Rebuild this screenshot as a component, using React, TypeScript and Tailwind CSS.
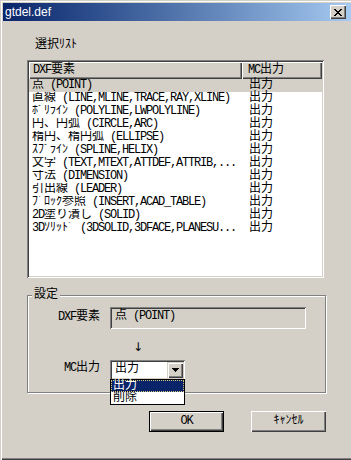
import React from "react";

function T({ s }: { s: string }) {
  const parts = s.split(/([\x20-\x7e]+)/);
  return (
    <>
      {parts.map((p, i) =>
        p === "" ? null : /^[\x20-\x7e]+$/.test(p) ? (
          <span key={i} className="tracking-[-1.2px]">
            {p}
          </span>
        ) : (
          <span key={i}>{p}</span>
        )
      )}
    </>
  );
}

const rows = [
  "点 (POINT)",
  "直線 (LINE,MLINE,TRACE,RAY,XLINE)",
  "ﾎﾟﾘﾗｲﾝ (POLYLINE,LWPOLYLINE)",
  "円、円弧 (CIRCLE,ARC)",
  "楕円、楕円弧 (ELLIPSE)",
  "ｽﾌﾟﾗｲﾝ (SPLINE,HELIX)",
  "文字 (TEXT,MTEXT,ATTDEF,ATTRIB,...",
  "寸法 (DIMENSION)",
  "引出線 (LEADER)",
  "ﾌﾞﾛｯｸ参照 (INSERT,ACAD_TABLE)",
  "2D塗り潰し (SOLID)",
  "3Dｿﾘｯﾄﾞ (3DSOLID,3DFACE,PLANESU...",
];

export default function App() {
  return (
    <div className="w-[351px] h-[460px] overflow-hidden bg-[#d4d0c8] text-[12px] leading-[13px] text-black font-['Liberation_Mono','Noto_Sans_CJK_JP',monospace]">
      <div className="w-[354px] h-[460px] p-[3px] bg-[#d4d0c8] flex flex-col shadow-[inset_1px_1px_0_#d4d0c8,inset_2px_2px_0_#ffffff,inset_-1px_-1px_0_#404040,inset_-2px_-2px_0_#808080]">
        {/* Title bar */}
        <div className="h-[18px] shrink-0 flex items-center justify-between bg-linear-to-r from-[#0a246a] to-[#a6caf0]">
          <span className="pl-[2px] text-white text-[12px] font-['Liberation_Sans',sans-serif]">gtdel.def</span>
          <div className="mr-[5px] w-[16px] h-[14px] bg-[#d4d0c8] flex items-center justify-center shadow-[inset_1px_1px_0_#ffffff,inset_-1px_-1px_0_#404040,inset_-2px_-2px_0_#808080]">
            <svg width="8" height="7" viewBox="0 0 8 7" shapeRendering="crispEdges">
              <path d="M0 0h2v1h-2zM6 0h2v1h-2zM1 1h2v1h-2zM5 1h2v1h-2zM2 2h4v1h-4zM3 3h2v1h-2zM2 4h4v1h-4zM1 5h2v1h-2zM5 5h2v1h-2zM0 6h2v1h-2zM6 6h2v1h-2z" fill="#000" />
            </svg>
          </div>
        </div>

        {/* Content */}
        <div className="pl-[24px] flex flex-col">
          <div className="mt-[18px] ml-[8px] h-[13px] whitespace-pre">
            <T s="選択ﾘｽﾄ" />
          </div>

          {/* List box */}
          <div className="mt-[8px] w-[297px] h-[218px] p-[2px] bg-white shadow-[inset_1px_1px_0_#808080,inset_-1px_-1px_0_#ffffff,inset_2px_2px_0_#404040,inset_-2px_-2px_0_#d4d0c8]">
            <div className="flex h-[17px]">
              <div className="w-[213px] h-[17px] pl-[4px] pt-[2px] bg-[#d4d0c8] whitespace-pre shadow-[inset_1px_1px_0_#ffffff,inset_-1px_-1px_0_#404040,inset_-2px_-2px_0_#808080]">
                <T s="DXF要素" />
              </div>
              <div className="w-[80px] h-[17px] pl-[6px] pt-[2px] bg-[#d4d0c8] whitespace-pre shadow-[inset_1px_1px_0_#ffffff,inset_-1px_-1px_0_#404040,inset_-2px_-2px_0_#808080]">
                <T s="MC出力" />
              </div>
            </div>
            {rows.map((r, i) => (
              <div key={i} className={i === 0 ? "flex h-[13px] bg-[#d4d0c8]" : "flex h-[13px]"}>
                <div className="w-[213px] pl-[3px] whitespace-pre overflow-hidden">
                  <T s={r} />
                </div>
                <div className="w-[80px] pl-[7px] whitespace-pre">
                  <T s="出力" />
                </div>
              </div>
            ))}
          </div>

          {/* Group box */}
          <div className="relative mt-[17px] w-[299px] h-[98px] border border-[#808080] shadow-[inset_1px_1px_0_#ffffff,1px_1px_0_#ffffff]">
            <div className="absolute left-[4px] top-[-7px] px-[2px] bg-[#d4d0c8] whitespace-pre">
              <T s="設定" />
            </div>
            <div className="flex pt-[11px]">
              <div className="w-[72px] pt-[4px] text-right whitespace-pre">
                <T s="DXF要素" />
              </div>
              <div className="ml-[10px] w-[196px] h-[22px] pl-[5px] pt-[3px] bg-[#d4d0c8] whitespace-pre shadow-[inset_1px_1px_0_#808080,inset_-1px_-1px_0_#ffffff,inset_2px_2px_0_#404040,inset_-2px_-2px_0_#d4d0c8]">
                <T s="点 (POINT)" />
              </div>
            </div>
            <div className="mt-[12px] h-[13px] pl-[105px] font-['DejaVu_Sans',sans-serif] text-[12px] leading-[13px]">↓</div>
            <div className="flex mt-[6px]">
              <div className="w-[72px] pt-[2px] text-right whitespace-pre">
                <T s="MC出力" />
              </div>
              <div className="relative ml-[10px] w-[75px] h-[20px] bg-white shadow-[inset_1px_1px_0_#808080,inset_-1px_-1px_0_#ffffff,inset_2px_2px_0_#404040,inset_-2px_-2px_0_#d4d0c8]">
                <div className="pl-[5px] pt-[3px] whitespace-pre">
                  <T s="出力" />
                </div>
                <div className="absolute right-[2px] top-[2px] w-[16px] h-[16px] bg-[#d4d0c8] flex items-center justify-center shadow-[inset_1px_1px_0_#d4d0c8,inset_2px_2px_0_#ffffff,inset_-1px_-1px_0_#404040,inset_-2px_-2px_0_#808080]">
                  <svg width="7" height="4" viewBox="0 0 7 4" shapeRendering="crispEdges">
                    <path d="M0 0h7v1h-7zM1 1h5v1h-5zM2 2h3v1h-3zM3 3h1v1h-1z" fill="#000" />
                  </svg>
                </div>
                <div className="absolute left-0 top-[19px] w-[75px] border border-black bg-white z-10">
                  <div className="h-[12px] leading-[12px] pl-[2px] bg-[#0a246a] text-white whitespace-pre outline-1 outline-dotted outline-[#d8c878] -outline-offset-1">
                    <T s="出力" />
                  </div>
                  <div className="h-[12px] leading-[12px] pl-[2px] whitespace-pre">
                    <T s="削除" />
                  </div>
                </div>
              </div>
            </div>
          </div>

          {/* Buttons */}
          <div className="flex mt-[18px] ml-[122px] gap-[27px]">
            <div className="w-[75px] h-[21px] flex items-center justify-center bg-[#d4d0c8] whitespace-pre shadow-[inset_1px_1px_0_#000000,inset_-1px_-1px_0_#000000,inset_2px_2px_0_#ffffff,inset_-2px_-2px_0_#404040,inset_-3px_-3px_0_#808080]">
              <T s="OK" />
            </div>
            <div className="w-[75px] h-[21px] flex items-center justify-center bg-[#d4d0c8] whitespace-pre shadow-[inset_1px_1px_0_#ffffff,inset_-1px_-1px_0_#404040,inset_-2px_-2px_0_#808080]">
              <T s="ｷｬﾝｾﾙ" />
            </div>
          </div>
        </div>
      </div>
    </div>
  );
}
